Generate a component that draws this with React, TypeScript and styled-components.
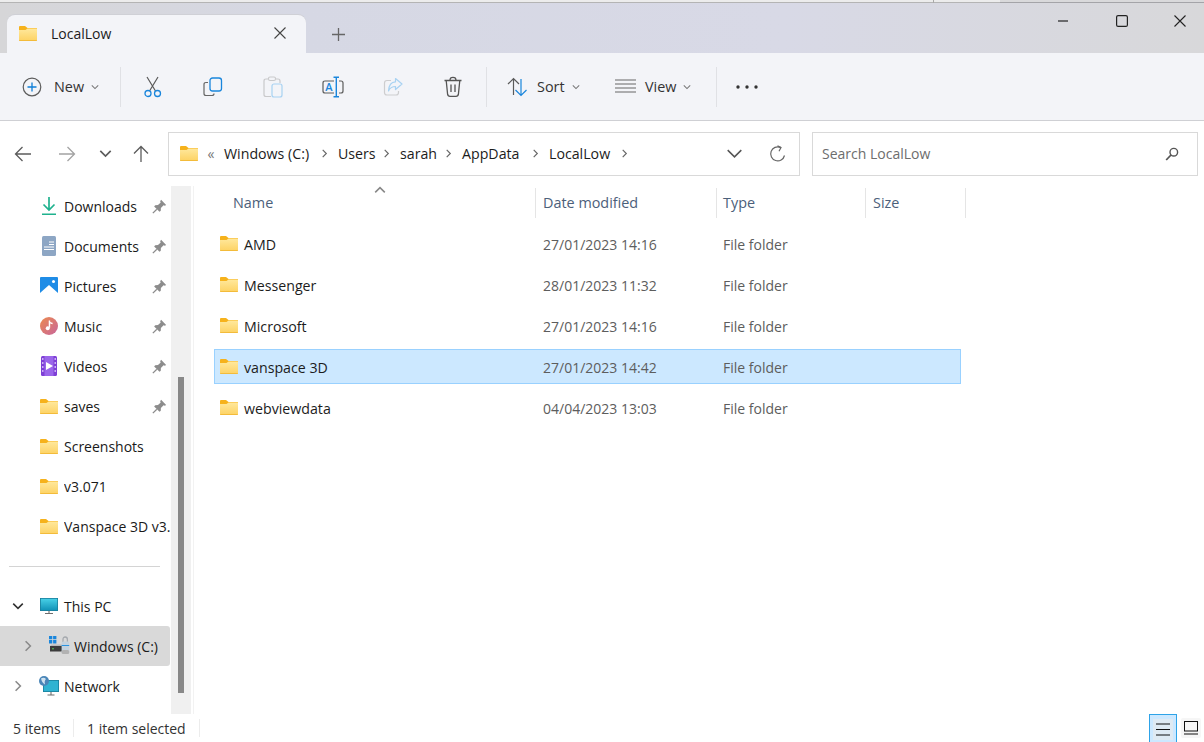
import React from "react";
import styled, { createGlobalStyle } from "styled-components";

const GlobalStyle = createGlobalStyle`
    html, body {
        margin: 0;
        padding: 0;
        background: #ffffff;
    }
    body {
        font-family: "Open Sans", "Noto Sans", "Liberation Sans", sans-serif;
        font-size: 14px;
        color: #1a1a1a;
    }
    * {
        box-sizing: border-box;
    }
    svg {
        display: block;
    }
`;

const Window = styled.div`
    width: 1204px;
    height: 742px;
    display: flex;
    flex-direction: column;
    overflow: hidden;
    background: #ffffff;
`;

const TopEdge = styled.div`
    height: 3px;
    flex: none;
    background:
        linear-gradient(#a9a9a9, #a9a9a9) 933px 0 / 1px 3px no-repeat,
        linear-gradient(90deg, #b4b4b4 0 1000px, #a4a4a8 1000px) 0 2px / 100% 1px no-repeat,
        linear-gradient(90deg, #ececec 0 1000px, #d9d9db 1000px);
`;

const TitleBar = styled.div`
    height: 50px;
    flex: none;
    display: flex;
    align-items: flex-end;
    padding-left: 7px;
    background: linear-gradient(90deg, #d6d6d8 0%, #d6d8e4 25%, #d8d9e6 65%, #d8d8da 100%);
`;

const Tab = styled.div`
    width: 299px;
    height: 38px;
    display: flex;
    align-items: center;
    padding: 0 20px 2px 12px;
    background: #f3f4f8;
    border-radius: 8px 8px 0 0;
    box-shadow: 0 -1px 0 #cfd0d6;
`;

const TabTitle = styled.span`
    flex: 1;
    margin-left: 14px;
    font-size: 14px;
    color: #1c1c1c;
`;

const NewTab = styled.div`
    width: 36px;
    height: 38px;
    margin-left: 14px;
    display: flex;
    align-items: center;
    justify-content: center;
`;

const WindowControls = styled.div`
    margin-left: auto;
    align-self: stretch;
    display: flex;
    gap: 10.5px;
`;

const WindowButton = styled.div`
    width: 48px;
    height: 36px;
    display: flex;
    align-items: center;
    justify-content: center;
`;

const Toolbar = styled.div`
    height: 68px;
    flex: none;
    display: flex;
    align-items: center;
    padding-left: 22px;
    background: #f3f4f8;
    border-bottom: 1px solid #cfd0d4;
`;

const ToolLabel = styled.button<{ $width: number }>`
    width: ${(p) => p.$width}px;
    height: 40px;
    display: flex;
    align-items: center;
    padding: 0;
    border: none;
    background: transparent;
    font: inherit;
    font-size: 14.4px;
    color: #333333;
`;

const ToolGlyph = styled.span<{ $gap: number }>`
    margin-right: ${(p) => p.$gap}px;
`;

const ToolCaret = styled.span`
    margin-left: 7px;
`;

const ToolIcon = styled.div`
    width: 60px;
    height: 40px;
    display: flex;
    align-items: center;
    justify-content: center;
`;

const ToolDivider = styled.div<{ $left: number; $right: number }>`
    width: 1px;
    height: 40px;
    margin: 0 ${(p) => p.$right}px 0 ${(p) => p.$left}px;
    background: #e0e1e5;
`;

const AddressRow = styled.div`
    height: 65px;
    flex: none;
    display: flex;
    align-items: center;
    padding-right: 6px;
`;

const NavButtons = styled.div`
    width: 168px;
    flex: none;
    display: flex;
    align-items: center;
`;

const NavButton = styled.div<{ $width: number }>`
    width: ${(p) => p.$width}px;
    height: 22px;
    display: flex;
    align-items: center;
    justify-content: center;
`;

const AddressBox = styled.div`
    width: 632px;
    height: 44px;
    display: flex;
    align-items: center;
    padding: 0 11px;
    border: 1px solid #d9d9d9;
`;

const Crumb = styled.span<{ $width: number }>`
    width: ${(p) => p.$width}px;
    flex: none;
    white-space: nowrap;
    font-size: 14.2px;
    color: #1c1c1c;
`;

const CrumbSep = styled.span`
    width: 27px;
    flex: none;
    display: flex;
    justify-content: center;
`;

const CrumbOverflow = styled(CrumbSep)`
    width: 26px;
    color: #777777;
`;

const AddressEnd = styled.div`
    margin-left: auto;
    display: flex;
    align-items: center;
    gap: 26px;
    padding-right: 1px;
`;

const SearchBox = styled.div`
    width: 386px;
    height: 44px;
    margin-left: 12px;
    display: flex;
    align-items: center;
    justify-content: space-between;
    padding: 0 18px 0 9px;
    border: 1px solid #d9d9d9;
    font-size: 14px;
    color: #6d6d6d;
`;

const Body = styled.div`
    flex: 1;
    min-height: 0;
    display: flex;
`;

const Sidebar = styled.nav`
    width: 171px;
    flex: none;
    overflow: hidden;
`;

const NavRow = styled.div<{ $active?: boolean }>`
    position: relative;
    width: 170px;
    height: 40px;
    display: flex;
    align-items: center;
    white-space: nowrap;
    overflow: hidden;
    background: ${(p) => (p.$active ? "#d9d9d9" : "transparent")};
    border-radius: 0 3px 3px 0;
`;

const NavLabel = styled.span`
    max-width: 108px;
    overflow: hidden;
`;

const Expander = styled.div<{ $width: number }>`
    width: ${(p) => p.$width}px;
    flex: none;
    display: flex;
    justify-content: flex-end;
`;

const NavIcon = styled.div<{ $width?: number; $gap?: number }>`
    width: ${(p) => p.$width ?? 18}px;
    flex: none;
    margin-right: ${(p) => p.$gap ?? 6}px;
    display: flex;
    justify-content: center;
`;

const PinSlot = styled.div`
    position: absolute;
    left: 152px;
    top: 13px;
`;

const NavDivider = styled.div`
    height: 1px;
    width: 151px;
    margin: 20px 0 19px 9px;
    background: #d4d4d4;
`;

const ScrollTrack = styled.div`
    width: 20px;
    flex: none;
    padding: 191px 7px 0;
    background: #f0f0f0;
`;

const ScrollThumb = styled.div`
    width: 6px;
    height: 316px;
    background: #888888;
`;

const Content = styled.main`
    flex: 1;
    margin-left: 2px;
    padding-left: 20px;
    border-left: 1px solid #f2f2f2;
`;

const HeaderRow = styled.div`
    position: relative;
    display: flex;
    height: 32px;
`;

const HeaderCell = styled.div<{ $width: number; $pad: number }>`
    width: ${(p) => p.$width}px;
    padding: 0 0 2px ${(p) => p.$pad}px;
    margin-top: 2px;
    display: flex;
    align-items: center;
    border-right: 1px solid #e5e5e5;
    color: #4c607a;
    font-size: 14.4px;
`;

const SortCaret = styled.div`
    position: absolute;
    left: 160px;
    top: -2px;
`;

const FileList = styled.div`
    padding-top: 8px;
    display: flex;
    flex-direction: column;
    gap: 6px;
`;

const FileRow = styled.div<{ $selected?: boolean }>`
    width: 747px;
    height: 35px;
    display: grid;
    grid-template-columns: 321px 180px 149px 1fr;
    align-items: center;
    background: ${(p) => (p.$selected ? "#cce8ff" : "transparent")};
    border: 1px solid ${(p) => (p.$selected ? "#99d1ff" : "transparent")};
`;

const FileName = styled.div`
    display: flex;
    align-items: center;
    gap: 6px;
    padding-left: 5px;
    color: #1c1c1c;
`;

const FileLabel = styled.span`
    padding-top: 2px;
    font-size: 14.2px;
`;

const FileMeta = styled.div`
    padding: 2px 0 0 7px;
    color: #5d5d5d;
`;

const StatusBar = styled.footer`
    height: 28px;
    flex: none;
    display: flex;
    align-items: center;
    padding-left: 13px;
    color: #333333;
    font-size: 14px;
`;

const StatusText = styled.span<{ $width: number; $pad?: number }>`
    width: ${(p) => p.$width}px;
    height: 18px;
    line-height: 20px;
    padding-left: ${(p) => p.$pad ?? 0}px;
    border-right: 1px solid #ececec;
`;

const ViewButtons = styled.div`
    margin-left: auto;
    display: flex;
    align-items: flex-start;
    align-self: stretch;
    padding-right: 3px;
    gap: 4px;
`;

const ListViewButton = styled.div`
    width: 28px;
    height: 28px;
    padding: 4px 3px 0;
    background: #cce8ff;
    border: 1px solid #2ea3e8;
    border-bottom: none;
`;

const ListViewInner = styled.div`
    width: 20px;
    height: 21px;
    display: flex;
    align-items: center;
    justify-content: center;
    background: #dfeaf3;
`;

const TileViewButton = styled.div`
    width: 20px;
    height: 20px;
    margin-top: 4px;
    display: flex;
    align-items: center;
    justify-content: center;
    background: #f6f6f6;
    border-radius: 2px;
`;

function FolderIcon({ id }: { id: string }) {
    return (
        <svg width="18" height="15" viewBox="0 0 18 15">
            <defs>
                <linearGradient id={id} x1="0" y1="0" x2="0" y2="1">
                    <stop offset="0" stopColor="#ffe89c" />
                    <stop offset="1" stopColor="#fdd263" />
                </linearGradient>
            </defs>
            <path d="M0 1 Q0 0 1 0 H6 L8.5 2 H18 V4.5 H0 Z" fill="#f6b21c" />
            <path d="M0 4 H6.5 L8.5 2.6 H18 V14 Q18 15 17 15 H1 Q0 15 0 14 Z" fill={`url(#${id})`} />
            <path d="M0 14 H18 V14.2 Q18 15 17 15 H1 Q0 15 0 14.2 Z" fill="#f3bb3a" />
        </svg>
    );
}

function Chevron({ dir, size = 10, color = "#555555", width = 1.3 }: { dir: "down" | "right" | "up"; size?: number; color?: string; width?: number }) {
    const d = dir === "down" ? "M1 3 L5 7 L9 3" : dir === "up" ? "M1 7 L5 3 L9 7" : "M3 1 L7 5 L3 9";
    return (
        <svg width={size} height={size} viewBox="0 0 10 10">
            <path d={d} fill="none" stroke={color} strokeWidth={width} />
        </svg>
    );
}

function Arrow({ dir, color }: { dir: "left" | "right" | "up"; color: string }) {
    const d =
        dir === "left"
            ? "M1.5 9 H17 M8.5 2 L1.5 9 L8.5 16"
            : dir === "right"
              ? "M1 9 H16.5 M9.5 2 L16.5 9 L9.5 16"
              : "M9 17 V1.5 M2 8.5 L9 1.5 L16 8.5";
    return (
        <svg width="18" height="18" viewBox="0 0 18 18">
            <path d={d} fill="none" stroke={color} strokeWidth="1.3" />
        </svg>
    );
}

function NewIcon() {
    return (
        <svg width="20" height="20" viewBox="0 0 20 20">
            <circle cx="10" cy="10" r="8.8" fill="none" stroke="#5c5c5c" strokeWidth="1.2" />
            <path d="M10 5.5 V14.5 M5.5 10 H14.5" stroke="#0f7fd8" strokeWidth="1.3" />
        </svg>
    );
}

function CutIcon() {
    return (
        <svg width="20" height="22" viewBox="0 0 20 22">
            <path d="M4 1 L12.5 15 M15 1 L6.5 15" stroke="#5a5a5a" strokeWidth="1.2" fill="none" />
            <circle cx="5" cy="17.5" r="3" fill="none" stroke="#1a86dc" strokeWidth="1.3" />
            <circle cx="14.5" cy="17.5" r="3" fill="none" stroke="#1a86dc" strokeWidth="1.3" />
        </svg>
    );
}

function CopyIcon() {
    return (
        <svg width="20" height="20" viewBox="0 0 20 20">
            <path d="M5 5.5 H3 Q1 5.5 1 7.5 V16.5 Q1 18.5 3 18.5 H9 Q11 18.5 11 16.5" fill="none" stroke="#666666" strokeWidth="1.2" />
            <rect x="7" y="1" width="11.5" height="13" rx="2.5" fill="#f3f4f8" stroke="#1a86dc" strokeWidth="1.3" />
        </svg>
    );
}

function PasteIcon() {
    return (
        <svg width="20" height="22" viewBox="0 0 20 22">
            <path d="M5 3 H3 Q1 3 1 5 V18.5 Q1 20.5 3 20.5 H8 M13 3 H15 Q17 3 17 5 V7" fill="none" stroke="#c9c9cb" strokeWidth="1.2" />
            <rect x="5.5" y="1" width="7" height="3.5" rx="1.5" fill="none" stroke="#c9c9cb" strokeWidth="1.1" />
            <rect x="9" y="8" width="10" height="13" rx="2" fill="#f3f4f8" stroke="#a8d2f2" strokeWidth="1.2" />
        </svg>
    );
}

function RenameIcon() {
    return (
        <svg width="22" height="22" viewBox="0 0 22 22">
            <path d="M12 5 H3 Q1 5 1 7 V15 Q1 17 3 17 H12 M17 5 H19 Q21 5 21 7 V15 Q21 17 19 17 H17" fill="none" stroke="#5c5c5c" strokeWidth="1.2" />
            <path d="M11.5 1.2 H17 M14.3 1.2 V20.8 M11.5 20.8 H17" fill="none" stroke="#1a86dc" strokeWidth="1.4" />
            <text x="7" y="15" textAnchor="middle" fontSize="11" fontWeight="600" fontFamily="Open Sans, sans-serif" fill="#1a86dc">A</text>
        </svg>
    );
}

function ShareIcon() {
    return (
        <svg width="20" height="20" viewBox="0 0 20 20">
            <path d="M8 3.5 H4 Q1.5 3.5 1.5 6 V15.5 Q1.5 18 4 18 H13 Q15.5 18 15.5 15.5 V14" fill="none" stroke="#cdcdcf" strokeWidth="1.2" />
            <path d="M12.5 1.5 L19 7 L12.5 12.5 V9.5 Q7.5 9.5 5.5 14 Q6 5 12.5 4.8 Z" fill="#f3f4f8" stroke="#a8d2f2" strokeWidth="1.2" strokeLinejoin="round" />
        </svg>
    );
}

function TrashIcon() {
    return (
        <svg width="20" height="22" viewBox="0 0 20 22">
            <path d="M1.5 4.5 H18.5 M7 4 Q7 1.3 10 1.3 Q13 1.3 13 4" fill="none" stroke="#555555" strokeWidth="1.3" />
            <path d="M3.2 4.5 L4.6 18.2 Q4.9 20.4 7 20.4 H13 Q15.1 20.4 15.4 18.2 L16.8 4.5" fill="none" stroke="#555555" strokeWidth="1.3" />
            <path d="M8 8.5 V16 M12 8.5 V16" stroke="#555555" strokeWidth="1.3" />
        </svg>
    );
}

function SortIcon() {
    return (
        <svg width="21" height="20" viewBox="0 0 21 20">
            <path d="M6.5 18 V1.5 M1 7 L6.5 1.5 L12 7" fill="none" stroke="#5a5a5a" strokeWidth="1.2" />
            <path d="M14 2 V18.5 M8.5 13 L14 18.5 L19.5 13" fill="none" stroke="#1a86dc" strokeWidth="1.2" />
        </svg>
    );
}

function LinesIcon({ width, height, gap, color, stroke }: { width: number; height: number; gap: number; color: string; stroke: number }) {
    const rows = [];
    for (let y = stroke; y < height; y += gap) {
        rows.push(<path key={y} d={`M0 ${y} H${width}`} stroke={color} strokeWidth={stroke} />);
    }
    return (
        <svg width={width} height={height} viewBox={`0 0 ${width} ${height}`}>
            {rows}
        </svg>
    );
}

function DotsIcon() {
    return (
        <svg width="22" height="4" viewBox="0 0 22 4">
            <circle cx="2" cy="2" r="1.7" fill="#333333" />
            <circle cx="11" cy="2" r="1.7" fill="#333333" />
            <circle cx="20" cy="2" r="1.7" fill="#333333" />
        </svg>
    );
}

function RefreshIcon() {
    return (
        <svg width="18" height="18" viewBox="0 0 18 18">
            <path d="M15.5 10.5 A7 7 0 1 1 11.5 2.4" fill="none" stroke="#666666" strokeWidth="1.2" />
            <path d="M8.5 0.8 L12 2.6 L10 6.2" fill="none" stroke="#666666" strokeWidth="1.2" />
        </svg>
    );
}

function SearchIcon() {
    return (
        <svg width="14" height="14" viewBox="0 0 14 14">
            <circle cx="8.8" cy="5.2" r="3.8" fill="none" stroke="#555555" strokeWidth="1.4" />
            <path d="M6 8 L1.2 13" stroke="#555555" strokeWidth="1.8" />
        </svg>
    );
}

function PinIcon() {
    return (
        <svg width="15" height="15" viewBox="0 0 14 14">
            <path d="M8.5 0.8 L13.2 5.5 L12 6.4 L10.8 5.9 L8.3 8.4 L8.2 11 L7 12 L2 7 L3 5.8 L5.6 5.7 L8.1 3.2 L7.6 2 Z" fill="#8c8c8c" />
            <path d="M4.5 9.5 L0.8 13.2" stroke="#8c8c8c" strokeWidth="1.2" />
        </svg>
    );
}

function DownloadsIcon() {
    return (
        <svg width="16" height="20" viewBox="0 0 16 20">
            <path d="M8 1 V13.5 M2.5 8.5 L8 14 L13.5 8.5" fill="none" stroke="#1fb28e" strokeWidth="1.7" />
            <path d="M1 18.3 H15" stroke="#1fb28e" strokeWidth="1.6" />
        </svg>
    );
}

function DocumentsIcon() {
    return (
        <svg width="14" height="20" viewBox="0 0 14 20">
            <rect width="14" height="20" rx="1.5" fill="#8da6c4" />
            <path d="M7 6 H12 M7 8.5 H12 M2 11 H12 M2 13.5 H12" stroke="#ffffff" strokeWidth="1" />
        </svg>
    );
}

function PicturesIcon() {
    return (
        <svg width="18" height="18" viewBox="0 0 18 18">
            <rect width="18" height="18" rx="1" fill="#1f8ce6" />
            <path d="M0 16 L9 8 L18 16 V18 H0 Z" fill="#ffffff" />
            <circle cx="13.5" cy="4.5" r="1.5" fill="#ffffff" />
        </svg>
    );
}

function MusicIcon() {
    return (
        <svg width="20" height="20" viewBox="0 0 20 20">
            <defs>
                <linearGradient id="music" x1="0" y1="0" x2="1" y2="1">
                    <stop offset="0" stopColor="#ec8a4e" />
                    <stop offset="1" stopColor="#c8669c" />
                </linearGradient>
            </defs>
            <circle cx="10" cy="10" r="10" fill="url(#music)" />
            <path d="M10.5 4 V12" stroke="#ffffff" strokeWidth="1.6" />
            <path d="M10.5 4 Q11 6.5 14 6.5 V8 Q11.5 8 10.5 6.5 Z" fill="#ffffff" />
            <circle cx="8.6" cy="12.5" r="2.2" fill="#ffffff" />
        </svg>
    );
}

function VideosIcon() {
    return (
        <svg width="16" height="20" viewBox="0 0 16 20">
            <rect width="16" height="20" rx="1.5" fill="#7e3fd6" />
            <rect x="3.5" y="0" width="9" height="20" fill="#9a66ea" />
            <path d="M1 3 H2.5 M1 7 H2.5 M1 11 H2.5 M1 15 H2.5 M13.5 3 H15 M13.5 7 H15 M13.5 11 H15 M13.5 15 H15" stroke="#e5d6ff" strokeWidth="1.4" />
            <path d="M5 6 L12 10 L5 14 Z" fill="#ffffff" />
        </svg>
    );
}

function MonitorIcon() {
    return (
        <svg width="18" height="16" viewBox="0 0 18 16">
            <defs>
                <linearGradient id="monitor" x1="0" y1="0" x2="0" y2="1">
                    <stop offset="0" stopColor="#47cfe6" />
                    <stop offset="1" stopColor="#1293b8" />
                </linearGradient>
            </defs>
            <rect width="18" height="13" fill="#1a7f9c" />
            <rect x="0.8" y="0.8" width="16.4" height="11.4" fill="url(#monitor)" />
            <path d="M9 13 V15.3 M5 15.5 H13" stroke="#6d6d6d" strokeWidth="1.1" />
        </svg>
    );
}

function DriveIcon() {
    return (
        <svg width="21" height="20" viewBox="0 0 21 20">
            <path d="M0 0 H3.3 V3.3 H0 Z M4.1 0 H7.4 V3.3 H4.1 Z M0 4.1 H3.3 V7.4 H0 Z M4.1 4.1 H7.4 V7.4 H4.1 Z" fill="#1a86dc" />
            <path d="M2.5 8.5 H13 V10 H1 Z" fill="#b9b9b9" />
            <rect x="1" y="10" width="13" height="5.5" fill="#3c3c3c" />
            <circle cx="4" cy="12.8" r="0.8" fill="#5fe05f" />
            <path d="M14 6 V3.4 Q14 1 16.2 1 Q18.4 1 18.4 3.4 V6" fill="none" stroke="#a5a9ae" strokeWidth="1.3" />
            <rect x="12.6" y="5.5" width="7.6" height="12" rx="1.6" fill="#c4d2de" />
            <path d="M12.6 9.5 H20.2" stroke="#2a93e0" strokeWidth="1.2" />
            <rect x="12.6" y="14" width="7.6" height="4" rx="1.6" fill="#b2b2b2" />
        </svg>
    );
}

function NetworkIcon() {
    return (
        <svg width="20" height="20" viewBox="0 0 20 20">
            <rect x="4" y="4" width="16" height="12" fill="#1a7f9c" />
            <rect x="4.8" y="4.8" width="14.4" height="10.4" fill="#2fb3d2" />
            <path d="M12 16 V18.5 M8.5 19 H15.5" stroke="#6d6d6d" strokeWidth="1.1" />
            <circle cx="5" cy="5" r="5" fill="#4a86b8" />
            <path d="M2 2.5 Q5 1 7 3 Q5 5 6 8.5 Q3 7 2 2.5 Z" fill="#cfe2f0" />
        </svg>
    );
}

type NavItem = { label: string; icon: React.ReactNode; pinned?: boolean };

const quickAccess: NavItem[] = [
    { label: "Downloads", icon: <DownloadsIcon />, pinned: true },
    { label: "Documents", icon: <DocumentsIcon />, pinned: true },
    { label: "Pictures", icon: <PicturesIcon />, pinned: true },
    { label: "Music", icon: <MusicIcon />, pinned: true },
    { label: "Videos", icon: <VideosIcon />, pinned: true },
    { label: "saves", icon: <FolderIcon id="nav-saves" />, pinned: true },
    { label: "Screenshots", icon: <FolderIcon id="nav-shots" /> },
    { label: "v3.071", icon: <FolderIcon id="nav-v3" /> },
    { label: "Vanspace 3D v3.", icon: <FolderIcon id="nav-van" /> },
];

const files = [
    { name: "AMD", date: "27/01/2023 14:16" },
    { name: "Messenger", date: "28/01/2023 11:32" },
    { name: "Microsoft", date: "27/01/2023 14:16" },
    { name: "vanspace 3D", date: "27/01/2023 14:42", selected: true },
    { name: "webviewdata", date: "04/04/2023 13:03" },
];

const crumbs = [
    { label: "Windows (C:)", width: 87 },
    { label: "Users", width: 35 },
    { label: "sarah", width: 35 },
    { label: "AppData", width: 60 },
    { label: "LocalLow", width: 62 },
];

export default function App() {
    return (
        <Window>
            <GlobalStyle />
            <TopEdge />
            <TitleBar>
                <Tab>
                    <FolderIcon id="tab-folder" />
                    <TabTitle>LocalLow</TabTitle>
                    <svg width="12" height="12" viewBox="0 0 12 12">
                        <path d="M0.5 0.5 L11.5 11.5 M11.5 0.5 L0.5 11.5" stroke="#444444" strokeWidth="1.1" />
                    </svg>
                </Tab>
                <NewTab>
                    <svg width="13" height="13" viewBox="0 0 13 13">
                        <path d="M6.5 0 V13 M0 6.5 H13" stroke="#666666" strokeWidth="1.3" />
                    </svg>
                </NewTab>
                <WindowControls>
                    <WindowButton>
                        <svg width="10" height="2" viewBox="0 0 10 2">
                            <path d="M0 1 H10" stroke="#222222" strokeWidth="1.2" />
                        </svg>
                    </WindowButton>
                    <WindowButton>
                        <svg width="12" height="12" viewBox="0 0 12 12">
                            <rect x="0.6" y="0.6" width="10.8" height="10.8" rx="1.5" fill="none" stroke="#222222" strokeWidth="1.2" />
                        </svg>
                    </WindowButton>
                    <WindowButton>
                        <svg width="12" height="12" viewBox="0 0 12 12">
                            <path d="M0.5 0.5 L11.5 11.5 M11.5 0.5 L0.5 11.5" stroke="#222222" strokeWidth="1.1" />
                        </svg>
                    </WindowButton>
                </WindowControls>
            </TitleBar>
            <Toolbar>
                <ToolLabel $width={98}>
                    <ToolGlyph $gap={12}><NewIcon /></ToolGlyph>
                    New
                    <ToolCaret><Chevron dir="down" size={8} color="#777777" /></ToolCaret>
                </ToolLabel>
                <ToolDivider $left={0} $right={2} />
                <ToolIcon><CutIcon /></ToolIcon>
                <ToolIcon><CopyIcon /></ToolIcon>
                <ToolIcon><PasteIcon /></ToolIcon>
                <ToolIcon><RenameIcon /></ToolIcon>
                <ToolIcon><ShareIcon /></ToolIcon>
                <ToolIcon><TrashIcon /></ToolIcon>
                <ToolDivider $left={3} $right={20} />
                <ToolLabel $width={108}>
                    <ToolGlyph $gap={9}><SortIcon /></ToolGlyph>
                    Sort
                    <ToolCaret><Chevron dir="down" size={8} color="#777777" /></ToolCaret>
                </ToolLabel>
                <ToolLabel $width={101}>
                    <ToolGlyph $gap={9}><LinesIcon width={21} height={15} gap={4} color="#666666" stroke={1} /></ToolGlyph>
                    View
                    <ToolCaret><Chevron dir="down" size={8} color="#777777" /></ToolCaret>
                </ToolLabel>
                <ToolDivider $left={0} $right={19} />
                <DotsIcon />
            </Toolbar>
            <AddressRow>
                <NavButtons>
                    <NavButton $width={46}><Arrow dir="left" color="#5c5c5c" /></NavButton>
                    <NavButton $width={42}><Arrow dir="right" color="#a3a3a3" /></NavButton>
                    <NavButton $width={34}><Chevron dir="down" size={13} color="#5c5c5c" /></NavButton>
                    <NavButton $width={38}><Arrow dir="up" color="#5c5c5c" /></NavButton>
                </NavButtons>
                <AddressBox>
                    <FolderIcon id="addr-folder" />
                    <CrumbOverflow>«</CrumbOverflow>
                    {crumbs.map((c) => (
                        <React.Fragment key={c.label}>
                            <Crumb $width={c.width}>{c.label}</Crumb>
                            <CrumbSep><Chevron dir="right" size={9} color="#666666" /></CrumbSep>
                        </React.Fragment>
                    ))}
                    <AddressEnd>
                        <Chevron dir="down" size={17} color="#555555" width={0.9} />
                        <RefreshIcon />
                    </AddressEnd>
                </AddressBox>
                <SearchBox>
                    Search LocalLow
                    <SearchIcon />
                </SearchBox>
            </AddressRow>
            <Body>
                <Sidebar>
                    {quickAccess.map((item) => (
                        <NavRow key={item.label}>
                            <Expander $width={40} />
                            <NavIcon>{item.icon}</NavIcon>
                            <NavLabel>{item.label}</NavLabel>
                            {item.pinned && <PinSlot><PinIcon /></PinSlot>}
                        </NavRow>
                    ))}
                    <NavDivider />
                    <NavRow>
                        <Expander $width={24}><Chevron dir="down" size={12} color="#333333" /></Expander>
                        <Expander $width={16} />
                        <NavIcon><MonitorIcon /></NavIcon>
                        This PC
                    </NavRow>
                    <NavRow $active>
                        <Expander $width={34}><Chevron dir="right" size={12} color="#8a8a8a" /></Expander>
                        <Expander $width={15} />
                        <NavIcon $width={21} $gap={4}><DriveIcon /></NavIcon>
                        Windows (C:)
                    </NavRow>
                    <NavRow>
                        <Expander $width={24}><Chevron dir="right" size={12} color="#8a8a8a" /></Expander>
                        <Expander $width={15} />
                        <NavIcon $width={20} $gap={5}><NetworkIcon /></NavIcon>
                        Network
                    </NavRow>
                </Sidebar>
                <ScrollTrack>
                    <ScrollThumb />
                </ScrollTrack>
                <Content>
                    <HeaderRow>
                        <HeaderCell $width={322} $pad={19}>Name</HeaderCell>
                        <HeaderCell $width={181} $pad={7}>Date modified</HeaderCell>
                        <HeaderCell $width={149} $pad={6}>Type</HeaderCell>
                        <HeaderCell $width={100} $pad={7}>Size</HeaderCell>
                        <SortCaret><Chevron dir="up" size={12} color="#888888" /></SortCaret>
                    </HeaderRow>
                    <FileList>
                        {files.map((f) => (
                            <FileRow key={f.name} $selected={f.selected}>
                                <FileName>
                                    <FolderIcon id={`file-${f.name.replace(" ", "")}`} />
                                    <FileLabel>{f.name}</FileLabel>
                                </FileName>
                                <FileMeta>{f.date}</FileMeta>
                                <FileMeta>File folder</FileMeta>
                                <div />
                            </FileRow>
                        ))}
                    </FileList>
                </Content>
            </Body>
            <StatusBar>
                <StatusText $width={61}>5 items</StatusText>
                <StatusText $width={126} $pad={13}>1 item selected</StatusText>
                <ViewButtons>
                    <ListViewButton>
                        <ListViewInner>
                            <LinesIcon width={14} height={13} gap={5.5} color="#111111" stroke={1} />
                        </ListViewInner>
                    </ListViewButton>
                    <TileViewButton>
                        <svg width="14" height="14" viewBox="0 0 14 14">
                            <rect x="0.5" y="0.5" width="13" height="9.5" fill="none" stroke="#111111" />
                            <path d="M0 13 H14" stroke="#111111" />
                        </svg>
                    </TileViewButton>
                </ViewButtons>
            </StatusBar>
        </Window>
    );
}
